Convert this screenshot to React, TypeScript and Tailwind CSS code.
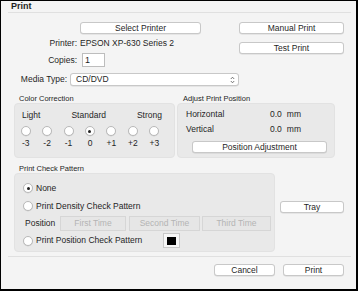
import React from "react";

function Btn({ className = "", children }: { className?: string; children?: React.ReactNode }) {
  return (
    <div
      className={`h-[12px] flex items-center justify-center rounded-[3px] border border-[#c8c8c8] bg-white text-[8.5px] leading-none text-[#1f1f1f] shadow-[0_0.5px_0.5px_rgba(0,0,0,0.12)] ${className}`}
    >
      {children}
    </div>
  );
}

function DisBtn({ className = "", children }: { className?: string; children?: React.ReactNode }) {
  return (
    <div
      className={`h-[15px] flex items-center justify-center border border-[#d6d6d6] bg-[#e6e6e6] text-[8.5px] leading-none text-[#b4b4b4] ${className}`}
    >
      {children}
    </div>
  );
}

function Radio({ checked = false }: { checked?: boolean }) {
  return (
    <span className="w-[10px] h-[10px] rounded-full border border-[#b9b9b9] bg-white flex items-center justify-center shrink-0 shadow-[0_0.5px_0.5px_rgba(0,0,0,0.1)]">
      {checked && <span className="w-[3px] h-[3px] rounded-full bg-[#222]" />}
    </span>
  );
}

export default function App() {
  const levels = ["-3", "-2", "-1", "0", "+1", "+2", "+3"];
  return (
    <div className="w-[358px] h-[291px] bg-black pl-px pt-px pr-[2px] pb-[2px] font-['Liberation_Sans',Arial,sans-serif] text-[#1f1f1f]">
      <div className="w-full h-full bg-[#f4f4f4] flex flex-col">
        <div className="ml-[7px] mr-[5px] h-[12px] border-b border-[#e0e0e0] pl-[3px] text-[9px] font-bold leading-[11px]">
          Print
        </div>

        <div className="flex mt-[9px]">
          <div className="flex flex-col w-[238px] text-[8.5px]">
            <div className="flex h-[12px]">
              <div className="w-[76px]" />
              <Btn className="ml-[3px] w-[121px]">Select Printer</Btn>
            </div>
            <div className="flex mt-[4px] h-[10px] items-center leading-none">
              <div className="w-[76px] text-right">Printer:</div>
              <div className="ml-[3px]">EPSON XP-630 Series 2</div>
            </div>
            <div className="flex mt-[5px] h-[14px] items-center leading-none">
              <div className="w-[76px] text-right">Copies:</div>
              <div className="ml-[5px] w-[23px] h-[14px] border border-[#bdbdbd] bg-white text-[9px] pl-[2px] flex items-center">
                1
              </div>
            </div>
            <div className="flex mt-[6px] h-[13px] items-center leading-none">
              <div className="w-[76px] text-right">Media Type:</div>
              <div className="ml-[3px] w-[193px] h-[13px] rounded-[3px] border border-[#c8c8c8] bg-white flex items-center justify-between pl-[5px] pr-[3px] shadow-[0_0.5px_0.5px_rgba(0,0,0,0.12)]">
                <span>CD/DVD</span>
                <svg width="5" height="8" viewBox="0 0 5 8">
                  <path d="M0.8 3 L2.5 1.2 L4.2 3 M0.8 5 L2.5 6.8 L4.2 5" fill="none" stroke="#555" strokeWidth="0.8" />
                </svg>
              </div>
            </div>
          </div>
          <div className="flex flex-col w-[105px]">
            <Btn className="w-[105px]">Manual Print</Btn>
            <Btn className="w-[105px] mt-[8px]">Test Print</Btn>
          </div>
        </div>

        <div className="flex mt-[8px] ml-[13px]">
          <div className="w-[161px] flex flex-col">
            <div className="h-[9px] pl-[5px] text-[7.5px] leading-[9px]">Color Correction</div>
            <div className="h-[55px] bg-[#e9e9e9] rounded-[4px] border border-[#e2e2e2] flex flex-col text-[8.5px] leading-none">
              <div className="mt-[6px] h-[10px] flex items-center justify-between pl-[7px] pr-[12px]">
                <span>Light</span>
                <span>Standard</span>
                <span>Strong</span>
              </div>
              <div className="mt-[6px] grid grid-cols-7 w-[150px]">
                {levels.map((l) => (
                  <div key={l} className="flex justify-center">
                    <Radio checked={l === "0"} />
                  </div>
                ))}
              </div>
              <div className="mt-[3px] grid grid-cols-7 w-[150px] h-[8px] items-center">
                {levels.map((l) => (
                  <div key={l} className="text-center">
                    {l}
                  </div>
                ))}
              </div>
            </div>
          </div>
          <div className="ml-[2px] w-[158px] flex flex-col">
            <div className="h-[9px] pl-[6px] text-[7.5px] leading-[9px]">Adjust Print Position</div>
            <div className="h-[55px] bg-[#e9e9e9] rounded-[4px] border border-[#e2e2e2] flex flex-col text-[8.5px] leading-none">
              <div className="mt-[5px] h-[10px] flex items-center pl-[8px]">
                <span className="w-[84px]">Horizontal</span>
                <span>0.0</span>
                <span className="ml-[5px]">mm</span>
              </div>
              <div className="mt-[5px] h-[10px] flex items-center pl-[8px]">
                <span className="w-[84px]">Vertical</span>
                <span>0.0</span>
                <span className="ml-[5px]">mm</span>
              </div>
              <Btn className="mt-[7px] ml-[14px] w-[135px]">Position Adjustment</Btn>
            </div>
          </div>
        </div>

        <div className="flex mt-[6px] ml-[13px]">
          <div className="w-[261px] flex flex-col">
            <div className="h-[9px] pl-[5px] text-[7.5px] leading-[9px]">Print Check Pattern</div>
            <div className="h-[79px] bg-[#e9e9e9] rounded-[4px] border border-[#e2e2e2] flex flex-col text-[8.5px] leading-none">
              <div className="mt-[9px] h-[10px] flex items-center pl-[8px]">
                <Radio checked />
                <span className="ml-[3px]">None</span>
              </div>
              <div className="mt-[8px] h-[10px] flex items-center pl-[8px]">
                <Radio />
                <span className="ml-[3px]">Print Density Check Pattern</span>
              </div>
              <div className="mt-[5px] h-[15px] flex items-center pl-[10px]">
                <span className="w-[35px]">Position</span>
                <DisBtn className="w-[66px]">First Time</DisBtn>
                <DisBtn className="ml-[3px] w-[71px]">Second Time</DisBtn>
                <DisBtn className="ml-[2px] w-[69px]">Third Time</DisBtn>
              </div>
              <div className="mt-[2px] h-[15px] flex items-center pl-[8px]">
                <Radio />
                <span className="ml-[3px] w-[127px]">Print Position Check Pattern</span>
                <div className="w-[17px] h-[15px] border border-[#c8c8c8] bg-[#f6f6f6] flex items-center justify-center">
                  <div className="w-[9px] h-[8px] bg-black" />
                </div>
              </div>
            </div>
          </div>
          <Btn className="ml-[5px] mt-[37px] w-[64px]">Tray</Btn>
        </div>

        <div className="mt-[4px] ml-[7px] mr-[5px] border-t border-[#e0e0e0]" />

        <div className="mt-[7px] flex justify-end pr-[12px]">
          <Btn className="w-[61px]">Cancel</Btn>
          <Btn className="ml-[8px] w-[61px]">Print</Btn>
        </div>
      </div>
    </div>
  );
}
